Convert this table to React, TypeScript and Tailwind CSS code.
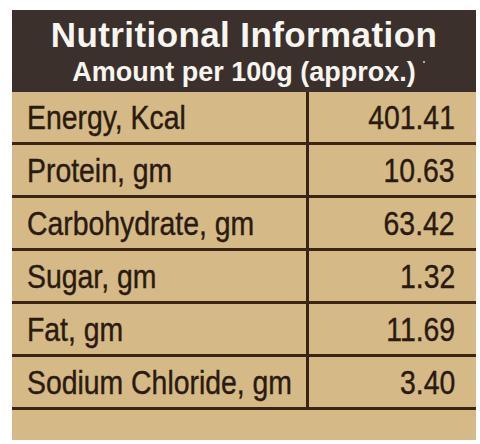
const rows = [
  { label: 'Energy, Kcal', value: '401.41' },
  { label: 'Protein, gm', value: '10.63' },
  { label: 'Carbohydrate, gm', value: '63.42' },
  { label: 'Sugar, gm', value: '1.32' },
  { label: 'Fat, gm', value: '11.69' },
  { label: 'Sodium Chloride, gm', value: '3.40' },
]

export default function App() {
  return (
    <div className="h-[444px] w-[480px] bg-white pt-[10px] pl-[12px] font-['Liberation_Sans',Arial,sans-serif]">
      <div className="flex h-[430px] w-[464px] flex-col bg-[#d5b987]">
        {/* Dark header band */}
        <div className="flex h-[82px] flex-col items-center bg-[#3b302b] text-[#f7f5f0]">
          <h1 className="mt-[5px] text-[35px] leading-[40px] font-bold tracking-[0.4px]">
            Nutritional Information
          </h1>
          <p className="relative mt-[2px] text-[27px] leading-[30px] font-bold">
            Amount per 100g (approx.)
            <span className="absolute -right-[9px] top-[4px] h-[2px] w-[2px] rounded-full bg-white/80" />
          </p>
        </div>

        {rows.map((row) => (
          <div
            key={row.label}
            className="grid h-[53px] grid-cols-[297px_1fr] border-b-[3px] border-[#3b2416] text-[#2a1a10]"
          >
            <div className="flex items-center border-r-[3px] border-[#3b2416] pl-[15px]">
              <span className="origin-left scale-x-[0.86] text-[33px] leading-none whitespace-nowrap [-webkit-text-stroke:0.4px_#2a1a10]">
                {row.label}
              </span>
            </div>
            <div className="flex items-center justify-end pr-[21px]">
              <span className="origin-right scale-x-[0.86] text-[33px] leading-none [-webkit-text-stroke:0.4px_#2a1a10]">
                {row.value}
              </span>
            </div>
          </div>
        ))}

        <div className="flex-1" />
      </div>
    </div>
  )
}
